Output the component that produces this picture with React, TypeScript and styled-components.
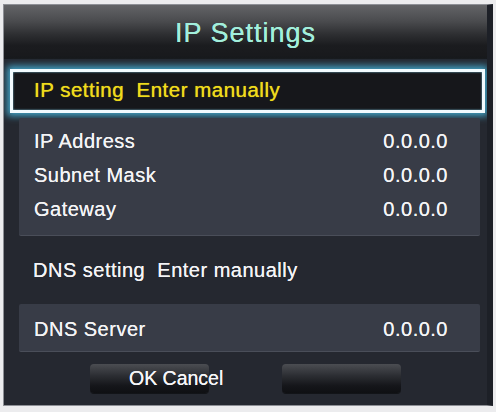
import React from 'react';
import styled, { createGlobalStyle } from 'styled-components';

const GlobalStyle = createGlobalStyle`
    html, body {
        margin: 0;
        padding: 0;
        background: #ececee;
    }
    body {
        font-family: "Liberation Sans", Arial, sans-serif;
    }
`;

const Panel = styled.div`
    box-sizing: border-box;
    width: 490px;
    height: 402px;
    margin: 4px 3px 0 3px;
    border: 1px solid #8e9096;
    border-right: 6px solid #1d2027;
    background: #252830;
    display: flex;
    flex-direction: column;
    overflow: hidden;
`;

const Header = styled.div`
    height: 54px;
    flex-shrink: 0;
    display: flex;
    align-items: center;
    justify-content: center;
    background: linear-gradient(#636467 0%, #4a4b4e 30%, #2d2e31 55%, #1b1c1f 75%, #18191c 100%);
`;

const Title = styled.h1`
    margin: 0;
    padding-top: 2px;
    font-size: 27px;
    font-weight: normal;
    letter-spacing: 1px;
    color: #a2efdc;
    text-shadow: 0 0 0.6px #a2efdc;
`;

const Body = styled.div`
    display: flex;
    flex-direction: column;
    padding: 10px 0 0 6px;
`;

const Selected = styled.div`
    box-sizing: border-box;
    width: 475px;
    height: 44px;
    border: 3px solid #f2fbff;
    background: #16171b;
    box-shadow: 0 0 7px 3px rgba(72, 186, 226, 0.85), inset 0 0 2px rgba(150, 230, 255, 0.9);
    display: flex;
    align-items: center;
    padding: 0 0 2px 21px;
    color: #efdc1c;
    font-size: 20.5px;
    letter-spacing: 0.5px;
    white-space: pre;
    text-shadow: 0 0 0.7px #efdc1c;
`;

const Group = styled.div<{ $top: number; $pad: string }>`
    box-sizing: border-box;
    width: 461px;
    margin: ${(p) => p.$top}px 0 0 9px;
    padding: ${(p) => p.$pad};
    background: #383c47;
    border-bottom: 1px solid #4a4e59;
    border-radius: 2px;
`;

const Row = styled.div<{ $h: number }>`
    height: ${(p) => p.$h}px;
    display: flex;
    align-items: center;
    justify-content: space-between;
    padding: 0 32px 0 15px;
    color: #f4f4f6;
    font-size: 20px;
    letter-spacing: 0.5px;
    text-shadow: 0 0 0.6px #f4f4f6;
`;

const Plain = styled.div`
    height: 68px;
    display: flex;
    align-items: center;
    padding: 0 0 0 23px;
    color: #f4f4f6;
    font-size: 20px;
    letter-spacing: 0.5px;
    white-space: pre;
    text-shadow: 0 0 0.6px #f4f4f6;
`;

const Buttons = styled.div`
    display: flex;
    justify-content: center;
    gap: 73px;
    margin: 12px 0 0 -6px;
`;

const Button = styled.div`
    box-sizing: border-box;
    width: 119px;
    height: 29px;
    border-radius: 4px;
    background: linear-gradient(#4b4d52 0%, #2c2e33 40%, #15161a 75%, #0f1013 100%);
    box-shadow: 0 1px 0 rgba(0, 0, 0, 0.5);
    display: flex;
    align-items: center;
    padding: 0 0 0 39px;
    color: #f6f6f8;
    font-size: 19.5px;
    white-space: nowrap;
    overflow: visible;
    position: relative;
    z-index: 1;
    text-shadow: 0 0 0.6px #f6f6f8;
`;

const ipRows = [
    { label: 'IP Address', value: '0.0.0.0' },
    { label: 'Subnet Mask', value: '0.0.0.0' },
    { label: 'Gateway', value: '0.0.0.0' },
];

export default function App() {
    return (
        <>
            <GlobalStyle />
            <Panel>
                <Header>
                    <Title>IP Settings</Title>
                </Header>
                <Body>
                    <Selected>{'IP setting  Enter manually'}</Selected>
                    <Group $top={5} $pad="6px 0 9px 0">
                        {ipRows.map((r) => (
                            <Row key={r.label} $h={34}>
                                <span>{r.label}</span>
                                <span>{r.value}</span>
                            </Row>
                        ))}
                    </Group>
                    <Plain>{'DNS setting  Enter manually'}</Plain>
                    <Group $top={0} $pad="4px 0 0 0">
                        <Row $h={43}>
                            <span>DNS Server</span>
                            <span>0.0.0.0</span>
                        </Row>
                    </Group>
                    <Buttons>
                        <Button>OK Cancel</Button>
                        <Button />
                    </Buttons>
                </Body>
            </Panel>
        </>
    );
}
